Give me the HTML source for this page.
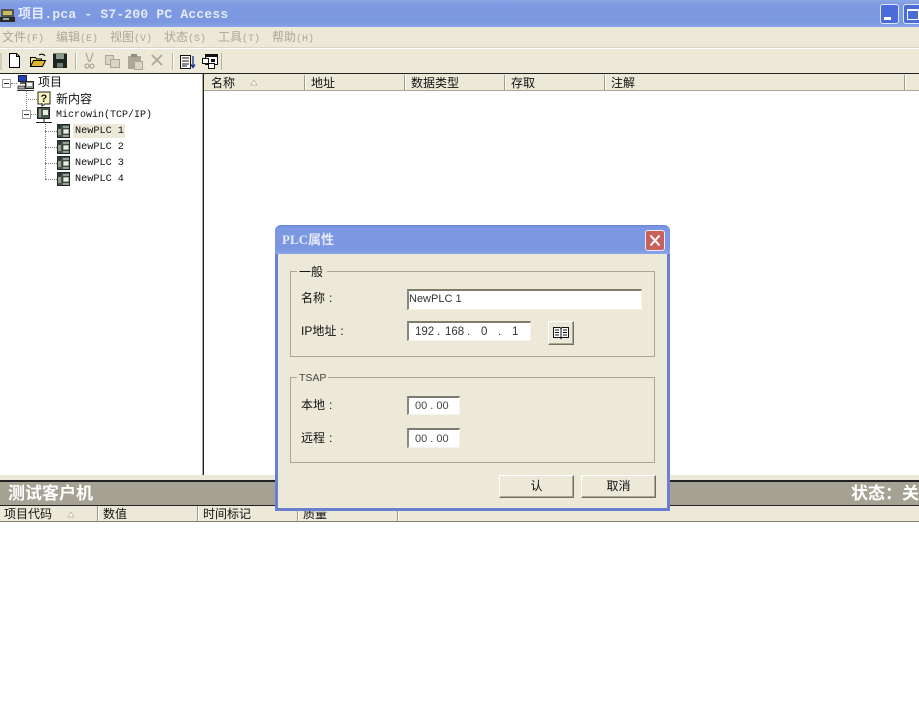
<!DOCTYPE html>
<html><head><meta charset="utf-8">
<style>
html,body{margin:0;padding:0;background:#fff}
#r{position:relative;width:919px;height:703px;overflow:hidden;background:#fff;font-family:"Liberation Sans","Noto Sans CJK SC",sans-serif;font-size:12px;color:#111}
#r div,#r span.a,#r svg{position:absolute}
.t{white-space:nowrap;line-height:14px}
.m{top:30px;color:#aca899;font-size:12px;letter-spacing:0}
.m small{font-size:10px;font-family:"Liberation Mono",monospace}
.h{background:#ece9d8}
.v{width:1px;background:#9d9a8a;border-right:1px solid #fff}
.mono{font-family:"Liberation Mono","Noto Sans CJK SC",monospace;font-size:10px}
.in{background:#fff;border-top:2px solid #7d7b6f;border-left:2px solid #8a8878;box-sizing:border-box;border-right:1px solid #f5f3ea;border-bottom:1px solid #f5f3ea}
.gb{border:1px solid #aaa899;box-sizing:border-box}
.btn{background:#ece9d8;box-sizing:border-box;border-top:1px solid #fff;border-left:1px solid #fff;border-right:1px solid #716f64;border-bottom:1px solid #716f64;box-shadow:inset -1px -1px 0 #aca899;text-align:center;line-height:20px;font-size:12px}
.dot{border-left:1px dotted #808080;width:0}
.doth{border-top:1px dotted #808080;height:0}
.sq{width:9px;height:9px;box-sizing:border-box;border:1px solid #999;background:#fff}
.sq:after{content:"";position:absolute;left:1px;top:3px;width:5px;height:1px;background:#333}
.c{margin-left:4px}
.ip{font-size:11.500px;color:#333}
</style></head><body><div id="r">

<!-- title bar -->
<div style="left:0;top:0;width:919px;height:27px;background:linear-gradient(180deg,#8ca6e4 0,#7f9be2 4px,#7a97e0 22px,#8aa4e6 27px)"></div>
<svg style="left:0;top:7px" width="16" height="16" viewBox="0 0 16 16"><rect x="1" y="2" width="13" height="11" fill="#555"/><rect x="3" y="4" width="9" height="4" fill="#c8c060"/><rect x="0" y="10" width="15" height="5" fill="#2a2a2a"/><rect x="3" y="11" width="6" height="2" fill="#9aa"/></svg>
<div class="t" style="left:18px;top:8px;color:#e4eaf8;font-family:'Liberation Mono','Noto Sans CJK SC',monospace;font-size:13px;font-weight:bold;letter-spacing:.2px">项目.pca - S7-200 PC Access</div>
<div style="left:880px;top:4px;width:19px;height:20px;box-sizing:border-box;border:1px solid #dfe6f8;border-radius:3px;background:#4a6cd8"></div>
<div style="left:884px;top:17px;width:7px;height:3px;background:#fff"></div>
<div style="left:903px;top:4px;width:19px;height:20px;box-sizing:border-box;border:1px solid #dfe6f8;border-radius:3px;background:#4a6cd8"></div>
<div style="left:907px;top:9px;width:12px;height:11px;box-sizing:border-box;border:1px solid #fff;border-top:2px solid #fff"></div>

<!-- menu -->
<div class="h" style="left:0;top:27px;width:919px;height:47px"></div>
<div style="left:0;top:48px;width:919px;height:1px;background:#fff"></div>
<div style="left:0;top:47px;width:919px;height:1px;background:#d8d5c4"></div>
<div class="t m" style="left:2px">文件<small>(F)</small></div>
<div class="t m" style="left:56px">编辑<small>(E)</small></div>
<div class="t m" style="left:110px">视图<small>(V)</small></div>
<div class="t m" style="left:164px">状态<small>(S)</small></div>
<div class="t m" style="left:218px">工具<small>(T)</small></div>
<div class="t m" style="left:272px">帮助<small>(H)</small></div>

<!-- toolbar -->
<div style="left:0;top:53px;width:2px;height:17px;background:#d0cdbc"></div>
<svg style="left:0;top:50px" width="225" height="23" viewBox="0 0 225 23">
<path d="M9.500 3.500h7l3 3v11h-10z" fill="#fff" stroke="#000"/><path d="M16.500 3.500v3h3" fill="none" stroke="#000"/>
<path d="M30.500 16.500v-9h5l1 1.500h5v2" fill="#f4e48a" stroke="#000"/><path d="M30.500 16.500l3-6h12l-3 6z" fill="#e0b830" stroke="#000"/><path d="M39 5q4-2 6 1" fill="none" stroke="#000"/>
<rect x="53" y="3.500" width="14" height="14.500" fill="#1c2420"/><rect x="56" y="4" width="8" height="5" fill="#8a9a90"/><rect x="57" y="13" width="6" height="4.500" fill="#6a7a70"/>
<rect x="75" y="3" width="1" height="17" fill="#b8b5a4"/><rect x="76" y="3" width="1" height="17" fill="#fff"/>
<g fill="none" stroke="#aca899" stroke-width="1.200"><path d="M86 3l3 9M93 3l-3 9"/><circle cx="87" cy="16" r="2"/><circle cx="92" cy="16" r="2"/></g>
<g fill="#d8d5c4" stroke="#aca899"><rect x="105.500" y="5.500" width="8" height="9"/><rect x="110.500" y="9.500" width="9" height="8"/></g>
<rect x="128" y="6" width="13" height="13" fill="#aca899"/><rect x="131" y="4" width="6" height="3" fill="#8f8d7f"/><rect x="134.500" y="11.500" width="8" height="8" fill="#d8d5c4" stroke="#aca899"/>
<path d="M152 5l10 10M162 5l-10 10" stroke="#aca899" stroke-width="1.800"/>
<rect x="172" y="3" width="1" height="17" fill="#b8b5a4"/><rect x="173" y="3" width="1" height="17" fill="#fff"/>
<rect x="180.500" y="5.500" width="10" height="13" fill="#fff" stroke="#111"/><path d="M182 8h7M182 11h7M182 14h7M182 16h5" stroke="#111"/><path d="M193 6v11M191 14.500l2 3 2-3" fill="none" stroke="#123090" stroke-width="1.300"/>
<rect x="205.500" y="4.500" width="12" height="10" fill="#fff" stroke="#111"/><rect x="205" y="4" width="13" height="3" fill="#111"/><rect x="202.500" y="8.500" width="6" height="5" fill="#fff" stroke="#111"/><rect x="208.500" y="13.500" width="6" height="5" fill="#fff" stroke="#111"/><rect x="211" y="9" width="4" height="3" fill="#111"/>
<rect x="221" y="3" width="1" height="17" fill="#b8b5a4"/>
</svg>

<!-- top black line -->
<div style="left:0;top:73px;width:919px;height:1px;background:#222"></div>

<!-- tree -->
<div style="left:202px;top:74px;width:1px;height:401px;background:#aaa899"></div>
<div style="left:203px;top:74px;width:1px;height:401px;background:#222"></div>
<div class="sq" style="left:2px;top:79px"></div>
<div class="doth" style="left:11px;top:83px;width:6px"></div>
<div class="dot" style="left:26px;top:90px;height:20px"></div>
<div class="doth" style="left:26px;top:99px;width:11px"></div>
<div class="sq" style="left:22px;top:110px"></div>
<div class="doth" style="left:31px;top:114px;width:5px"></div>
<div class="dot" style="left:45px;top:124px;height:55px"></div>
<div class="doth" style="left:45px;top:131px;width:12px"></div>
<div class="doth" style="left:45px;top:147px;width:12px"></div>
<div class="doth" style="left:45px;top:163px;width:12px"></div>
<div class="doth" style="left:45px;top:179px;width:12px"></div>

<svg style="left:17px;top:75px" width="18" height="17" viewBox="0 0 18 17"><rect x="1.500" y="0.500" width="8" height="6" fill="#2040c0" stroke="#222"/><rect x="3" y="7" width="5" height="2" fill="#555"/><rect x="8.500" y="6.500" width="8" height="7" fill="#8a9a90" stroke="#222"/><rect x="10" y="8" width="5" height="3" fill="#fff"/><path d="M1 11h7v3H1z" fill="#aaa" stroke="#222" stroke-width=".8"/><path d="M0 15.500h17" stroke="#333"/></svg>
<svg style="left:37px;top:91px" width="14" height="16" viewBox="0 0 14 16"><rect x="1" y="1" width="12" height="12" fill="#fff8c0" stroke="#222"/><path d="M5 12v3l3-2" fill="#fff8c0" stroke="#222"/><text x="3.500" y="11" font-family="Liberation Sans" font-size="11" font-weight="bold" fill="#111">?</text></svg>
<svg style="left:36px;top:107px" width="16" height="17" viewBox="0 0 16 17"><rect x="1.500" y="0.500" width="12" height="11" fill="#46594c" stroke="#222"/><rect x="7" y="3" width="5" height="5" fill="#e8f0e0"/><path d="M3 3h2M3 5h2M3 7h2M3 9h2" stroke="#dfe8df"/><path d="M8 12v3M0 15.500h16" stroke="#222"/></svg>
<svg style="left:57px;top:124px" width="14" height="14" viewBox="0 0 14 14"><rect x="0.500" y="0.500" width="12" height="13" fill="#44594a" stroke="#222"/><rect x="0.500" y="0.500" width="4" height="4" fill="#2c3a30"/><rect x="6" y="5" width="6" height="5" fill="#e4f0e4" stroke="#222" stroke-width=".6"/><path d="M1 6h3M1 8h3M1 10h3M6 3h6M6 12h6" stroke="#dfe8df"/></svg>
<svg style="left:57px;top:140px" width="14" height="14" viewBox="0 0 14 14"><rect x="0.500" y="0.500" width="12" height="13" fill="#44594a" stroke="#222"/><rect x="0.500" y="0.500" width="4" height="4" fill="#2c3a30"/><rect x="6" y="5" width="6" height="5" fill="#e4f0e4" stroke="#222" stroke-width=".6"/><path d="M1 6h3M1 8h3M1 10h3M6 3h6M6 12h6" stroke="#dfe8df"/></svg>
<svg style="left:57px;top:156px" width="14" height="14" viewBox="0 0 14 14"><rect x="0.500" y="0.500" width="12" height="13" fill="#44594a" stroke="#222"/><rect x="0.500" y="0.500" width="4" height="4" fill="#2c3a30"/><rect x="6" y="5" width="6" height="5" fill="#e4f0e4" stroke="#222" stroke-width=".6"/><path d="M1 6h3M1 8h3M1 10h3M6 3h6M6 12h6" stroke="#dfe8df"/></svg>
<svg style="left:57px;top:172px" width="14" height="14" viewBox="0 0 14 14"><rect x="0.500" y="0.500" width="12" height="13" fill="#44594a" stroke="#222"/><rect x="0.500" y="0.500" width="4" height="4" fill="#2c3a30"/><rect x="6" y="5" width="6" height="5" fill="#e4f0e4" stroke="#222" stroke-width=".6"/><path d="M1 6h3M1 8h3M1 10h3M6 3h6M6 12h6" stroke="#dfe8df"/></svg>

<div class="t" style="left:38px;top:75px">项目</div>
<div class="t" style="left:56px;top:92px">新内容</div>
<div class="t mono" style="left:56px;top:109px">Microwin(TCP/IP)</div>
<div style="left:73px;top:124px;width:52px;height:14px;background:#ece9d8"></div>
<div class="t mono" style="left:75px;top:125px;font-size:10.200px">NewPLC 1</div>
<div class="t mono" style="left:75px;top:141px;font-size:10.200px">NewPLC 2</div>
<div class="t mono" style="left:75px;top:157px;font-size:10.200px">NewPLC 3</div>
<div class="t mono" style="left:75px;top:173px;font-size:10.200px">NewPLC 4</div>

<!-- list header top -->
<div class="h" style="left:204px;top:74px;width:715px;height:16px"></div>
<div style="left:204px;top:90px;width:715px;height:1px;background:#aca899"></div>
<div class="v" style="left:304px;top:75px;height:15px"></div>
<div class="v" style="left:404px;top:75px;height:15px"></div>
<div class="v" style="left:504px;top:75px;height:15px"></div>
<div class="v" style="left:604px;top:75px;height:15px"></div>
<div class="v" style="left:904px;top:75px;height:15px"></div>
<div class="t" style="left:211px;top:76px">名称</div>
<svg style="left:250px;top:79px" width="8" height="7"><path d="M4 1L1 6h6z" fill="#fff" stroke="#aca899" stroke-width=".7"/></svg>
<div class="t" style="left:311px;top:76px">地址</div>
<div class="t" style="left:411px;top:76px">数据类型</div>
<div class="t" style="left:511px;top:76px">存取</div>
<div class="t" style="left:611px;top:76px">注解</div>

<!-- bottom pane -->
<div style="left:0;top:475px;width:919px;height:6px;background:#ece9d8"></div>
<div style="left:0;top:480px;width:919px;height:2px;background:#222"></div>
<div style="left:0;top:482px;width:919px;height:23px;background:#a5a294"></div>
<div style="left:0;top:505px;width:919px;height:1px;background:#222"></div>
<div class="h" style="left:0;top:506px;width:919px;height:15px"></div>
<div style="left:0;top:521px;width:919px;height:1px;background:#85826f"></div>
<div class="t" style="left:8px;top:485px;color:#fff;font-size:17px;font-weight:bold;line-height:18px">测试客户机</div>
<div class="t" style="left:851px;top:485px;color:#fff;font-size:17px;font-weight:bold;line-height:18px">状态：关</div>
<div class="t" style="left:4px;top:507px">项目代码</div>
<svg style="left:67px;top:511px" width="8" height="7"><path d="M4 1L1 6h6z" fill="#fff" stroke="#aca899" stroke-width=".7"/></svg>
<div class="v" style="left:97px;top:506px;height:15px"></div>
<div class="t" style="left:103px;top:507px">数值</div>
<div class="v" style="left:197px;top:506px;height:15px"></div>
<div class="t" style="left:203px;top:507px">时间标记</div>
<div class="v" style="left:297px;top:506px;height:15px"></div>
<div class="t" style="left:303px;top:507px">质量</div>
<div class="v" style="left:397px;top:506px;height:15px"></div>

<!-- dialog -->
<div style="left:275px;top:225px;width:395px;height:286px;box-sizing:border-box;background:#ece9d8;border:3px solid #6a7fd2;border-top:0;border-radius:6px 6px 0 0;overflow:hidden">
</div>
<div style="left:275px;top:225px;width:395px;height:29px;border-radius:6px 6px 0 0;background:linear-gradient(180deg,#6a86d8 0,#7d98e2 3px,#7b97e2 24px,#8ca6ea 29px)"></div>
<div class="t" style="left:282px;top:233px;color:#e4eaf8;font-size:13px;font-weight:bold;font-family:'Liberation Serif','Noto Sans CJK SC',serif">PLC属性</div>
<div style="left:645px;top:230px;width:20px;height:21px;box-sizing:border-box;border:1px solid #e8ecf8;border-radius:3px;background:#c8605c"></div>
<svg style="left:645px;top:230px" width="20" height="21"><path d="M5.500 5.500l9 10M14.500 5.500l-9 10" stroke="#fff" stroke-width="2"/></svg>

<div class="gb" style="left:290px;top:271px;width:365px;height:86px"></div>
<div class="t" style="left:297px;top:265px;background:#ece9d8;padding:0 2px;width:26px">一般</div>
<div class="t" style="left:301px;top:291px">名称<span class="c">:</span></div>
<div class="in" style="left:407px;top:289px;width:235px;height:21px"></div>
<div class="t" style="left:409px;top:292px;font-size:11px;color:#333">NewPLC 1</div>
<div class="t" style="left:301px;top:324px">IP地址<span class="c">:</span></div>
<div class="in" style="left:407px;top:321px;width:124px;height:20px"></div>
<div class="t ip" style="left:415px;top:325px">192</div>
<div class="t ip" style="left:437px;top:325px">.</div>
<div class="t ip" style="left:445px;top:325px">168</div>
<div class="t ip" style="left:467px;top:325px">.</div>
<div class="t ip" style="left:481px;top:325px">0</div>
<div class="t ip" style="left:498px;top:325px">.</div>
<div class="t ip" style="left:512px;top:325px">1</div>
<div class="btn" style="left:548px;top:321px;width:26px;height:24px"></div>
<svg style="left:552px;top:326px" width="18" height="14"><path d="M1.500 1.500h6.500l1 1 1-1h6.500v10h-7l-.5 1-.5-1h-7z" fill="#fff" stroke="#111"/><path d="M3 4h4M3 6.500h4M3 9h4M11 4h4M11 6.500h4M11 9h4M9 2.500v9" stroke="#111"/></svg>

<div class="gb" style="left:290px;top:377px;width:365px;height:86px"></div>
<div class="t" style="left:297px;top:371px;background:#ece9d8;padding:0 2px;font-size:10.500px;color:#444">TSAP</div>
<div class="t" style="left:301px;top:398px">本地<span class="c">:</span></div>
<div class="in" style="left:407px;top:396px;width:53px;height:19px"></div>
<div class="t" style="left:415px;top:399px;font-size:11px;color:#444">00 . 00</div>
<div class="t" style="left:301px;top:431px">远程<span class="c">:</span></div>
<div class="in" style="left:407px;top:428px;width:53px;height:20px"></div>
<div class="t" style="left:415px;top:432px;font-size:11px;color:#444">00 . 00</div>

<div class="btn" style="left:499px;top:475px;width:75px;height:23px">认</div>
<div class="btn" style="left:581px;top:475px;width:75px;height:23px">取消</div>

</div></body></html>
